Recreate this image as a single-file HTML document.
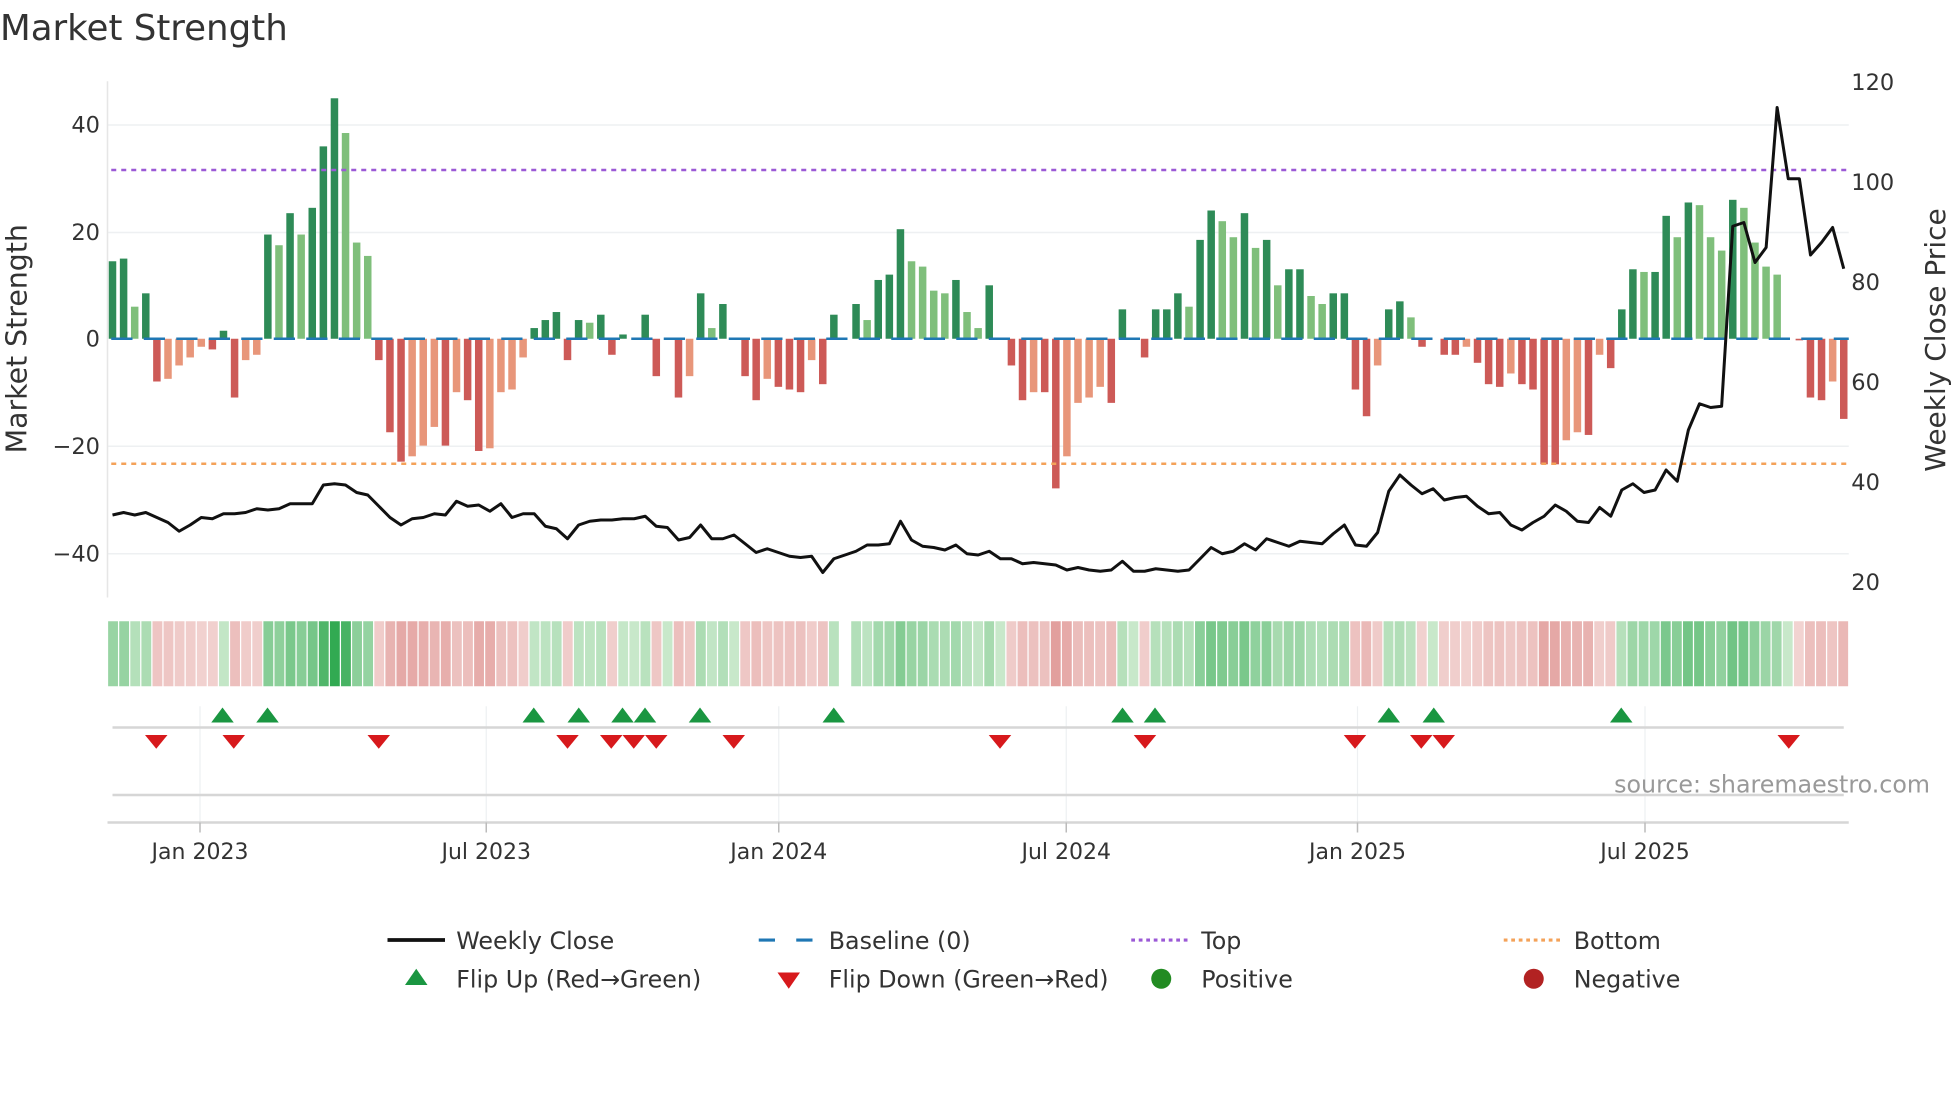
<!DOCTYPE html>
<html><head><meta charset="utf-8"><style>
html,body{margin:0;padding:0;background:#fff;}
svg{display:block;font-family:"DejaVu Sans","Liberation Sans",sans-serif;}
</style></head><body>
<svg id="s" width="1960" height="1102" viewBox="0 0 1568 881.6" xmlns="http://www.w3.org/2000/svg">
<rect width="1568" height="882" fill="#fff"/>
<text x="0" y="32" font-size="28.5" fill="#333">Market Strength</text>
<g stroke="#eef0f2" stroke-width="1.2">
<line x1="86" x2="1479" y1="100" y2="100"/><line x1="86" x2="1479" y1="186" y2="186"/>
<line x1="86" x2="1479" y1="357" y2="357"/><line x1="86" x2="1479" y1="443" y2="443"/>
</g>
<line x1="86" x2="86" y1="65" y2="478" stroke="#e6e6e6" stroke-width="1.2"/>
<g font-size="18" fill="#333" text-anchor="end">
<text x="80" y="106">40</text><text x="80" y="192">20</text><text x="80" y="277">0</text>
<text x="80" y="363">−20</text><text x="80" y="449">−40</text></g>
<g font-size="18" fill="#333">
<text x="1481" y="72">120</text><text x="1481" y="152">100</text><text x="1481" y="232">80</text>
<text x="1481" y="312">60</text><text x="1481" y="392">40</text><text x="1481" y="472">20</text></g>
<text transform="translate(21,271) rotate(-90)" font-size="22.7" fill="#333" text-anchor="middle">Market Strength</text>
<text transform="translate(1556,272) rotate(-90)" font-size="22.4" fill="#333" text-anchor="middle">Weekly Close Price</text>
<g id="bars"></g>
<line x1="89" x2="1479" y1="271" y2="271" stroke="#1f77b4" stroke-width="2" stroke-dasharray="17,9"/>
<line x1="89" x2="1479" y1="136" y2="136" stroke="#9b59d6" stroke-width="2" stroke-dasharray="4,4"/>
<line x1="89" x2="1479" y1="371" y2="371" stroke="#f4a259" stroke-width="2" stroke-dasharray="4,4"/>
<polyline id="price" fill="none" stroke="#111" stroke-width="2.4" stroke-linejoin="round"/>
<g id="heat"></g>
<g stroke="#eef0f2" stroke-width="1">
<line x1="160" x2="160" y1="565" y2="658"/><line x1="389" x2="389" y1="565" y2="658"/>
<line x1="623" x2="623" y1="565" y2="658"/><line x1="853" x2="853" y1="565" y2="658"/>
<line x1="1086" x2="1086" y1="565" y2="658"/><line x1="1316" x2="1316" y1="565" y2="658"/></g>
<line x1="90" x2="1475" y1="582" y2="582" stroke="#d6d6d6" stroke-width="2"/>
<line x1="90" x2="1475" y1="636" y2="636" stroke="#d6d6d6" stroke-width="2"/>
<line x1="86" x2="1479" y1="658" y2="658" stroke="#d6d6d6" stroke-width="2"/>
<g stroke="#bbb" stroke-width="1.2">
<line x1="160" x2="160" y1="658" y2="666"/><line x1="389" x2="389" y1="658" y2="666"/>
<line x1="623" x2="623" y1="658" y2="666"/><line x1="853" x2="853" y1="658" y2="666"/>
<line x1="1086" x2="1086" y1="658" y2="666"/><line x1="1316" x2="1316" y1="658" y2="666"/></g>
<g id="flips"></g>
<g font-size="17.6" fill="#333" text-anchor="middle">
<text x="160" y="687">Jan 2023</text><text x="389" y="687">Jul 2023</text><text x="623" y="687">Jan 2024</text>
<text x="853" y="687">Jul 2024</text><text x="1086" y="687">Jan 2025</text><text x="1316" y="687">Jul 2025</text></g>
<text x="1544" y="634" font-size="19" fill="#999" text-anchor="end">source: sharemaestro.com</text>
<g font-size="19" fill="#333">
<line x1="310" x2="356" y1="752" y2="752" stroke="#111" stroke-width="3"/><text x="365" y="759">Weekly Close</text>
<line x1="607" x2="652" y1="752" y2="752" stroke="#1f77b4" stroke-width="2.5" stroke-dasharray="13,17"/><text x="663" y="759">Baseline (0)</text>
<line x1="905" x2="950" y1="752" y2="752" stroke="#9b59d6" stroke-width="2.5" stroke-dasharray="3,3"/><text x="961" y="759">Top</text>
<line x1="1203" x2="1248" y1="752" y2="752" stroke="#f4a259" stroke-width="2.5" stroke-dasharray="3,3"/><text x="1259" y="759">Bottom</text>
<polygon points="324,788 342,788 333,775" fill="#1a9641"/><text x="365" y="790">Flip Up (Red→Green)</text>
<polygon points="622,778 640,778 631,791" fill="#d7191c"/><text x="663" y="790">Flip Down (Green→Red)</text>
<circle cx="929" cy="783" r="8" fill="#228b22"/><text x="961" y="790">Positive</text>
<circle cx="1227" cy="783" r="8" fill="#b22222"/><text x="1259" y="790">Negative</text>
</g>
</svg>
<script>
var V=[14.5,15,6,8.5,-8,-7.5,-5,-3.5,-1.5,-2,1.5,-11,-4,-3,19.5,17.5,23.5,19.5,24.5,36,45,38.5,18,15.5,-4,-17.5,-23,-22,-20,-16.5,-20,-10,-11.5,-21,-20.5,-10,-9.5,-3.5,2,3.5,5,-4,3.5,3,4.5,-3,0.8,0,4.5,-7,0,-11,-7,8.5,2,6.5,0,-7,-11.5,-7.5,-9,-9.5,-10,-4,-8.5,4.5,0,6.5,3.5,11,12,20.5,14.5,13.5,9,8.5,11,5,2,10,0,-5,-11.5,-10,-10,-28,-22,-12,-11,-9,-12,5.5,0,-3.5,5.5,5.5,8.5,6,18.5,24,22,19,23.5,17,18.5,10,13,13,8,6.5,8.5,8.5,-9.5,-14.5,-5,5.5,7,4,-1.5,0,-3,-3,-1.5,-4.5,-8.5,-9,-6.5,-8.5,-9.5,-23.5,-23.5,-19,-17.5,-18,-3,-5.5,5.5,13,12.5,12.5,23,19,25.5,25,19,16.5,26,24.5,18,13.5,12,0,-0.3,-11,-11.5,-8,-15];
var P=[412,410,412,410,414,418,425,420,414,415,411,411,410,407,408,407,403,403,403,388,387,388,394,396,405,414,420,415,414,411,412,401,405,404,409,403,414,411,411,421,423,431,420,417,416,416,415,415,413,421,422,432,430,420,431,431,428,435,442,439,442,445,446,445,458,447,444,441,436,436,435,417,432,437,438,440,436,443,444,441,447,447,451,450,451,452,456,454,456,457,456,449,457,457,455,456,457,456,447,438,443,441,435,440,431,434,437,433,434,435,427,420,436,437,426,393,380,388,395,391,400,398,397,405,411,410,420,424,418,413,404,409,417,418,406,413,392,387,394,392,376,385,344,323,326,325,181,178,210,198,86,143,143,204,194,182,215];
var NS="http://www.w3.org/2000/svg";
function el(t,a,p){var e=document.createElementNS(NS,t);for(var k in a)e.setAttribute(k,a[k]);p.appendChild(e);return e;}
var step=(1475-90)/(V.length-1),bars=document.getElementById('bars'),heat=document.getElementById('heat');
var hstep=(1479-86)/V.length;
for(var i=0;i<V.length;i++){
 var x=90+i*step,v=V[i],pv=i?V[i-1]:0,c;
 if(v>=0)c=(v>=pv)?'#2e8b57':'#7fbf7b';else c=(v<=pv)?'#cd5a57':'#e8967a';
 var y=271-v*4.275,h=Math.abs(v*4.275);
 if(h>0.3)el('rect',{x:x-3,y:Math.min(y,271),width:6,height:h,fill:c},bars);
 var m=Math.min(Math.abs(v)/45,1),col;
 if(v>=0){var r=Math.round(200-150*m),g=Math.round(232-62*m),b=Math.round(202-120*m);col='rgb('+r+','+g+','+b+')';}
 else{var r=Math.round(242-25*m),g=Math.round(212-85*m),b=Math.round(210-85*m);col='rgb('+r+','+g+','+b+')';}
 var hx=86+i*hstep,cx=hx+hstep/2;
 if(!(cx>672&&cx<681))el('rect',{x:hx+0.5,y:497,width:hstep-1,height:52,fill:col},heat);
}
var pts=[];for(var i=0;i<P.length;i++)pts.push((90+i*step).toFixed(1)+','+P[i]);
document.getElementById('price').setAttribute('points',pts.join(' '));
var fl=document.getElementById('flips');
[178,214,427,463,498,516,560,667,898,924,1111,1147,1297].forEach(function(x){el('polygon',{points:(x-9)+',578 '+(x+9)+',578 '+x+',566',fill:'#1a9641'},fl);});
[125,187,303,454,489,507,525,587,800,916,1084,1137,1155,1431].forEach(function(x){el('polygon',{points:(x-9)+',588 '+(x+9)+',588 '+x+',599',fill:'#d7191c'},fl);});
</script>
</body></html>
